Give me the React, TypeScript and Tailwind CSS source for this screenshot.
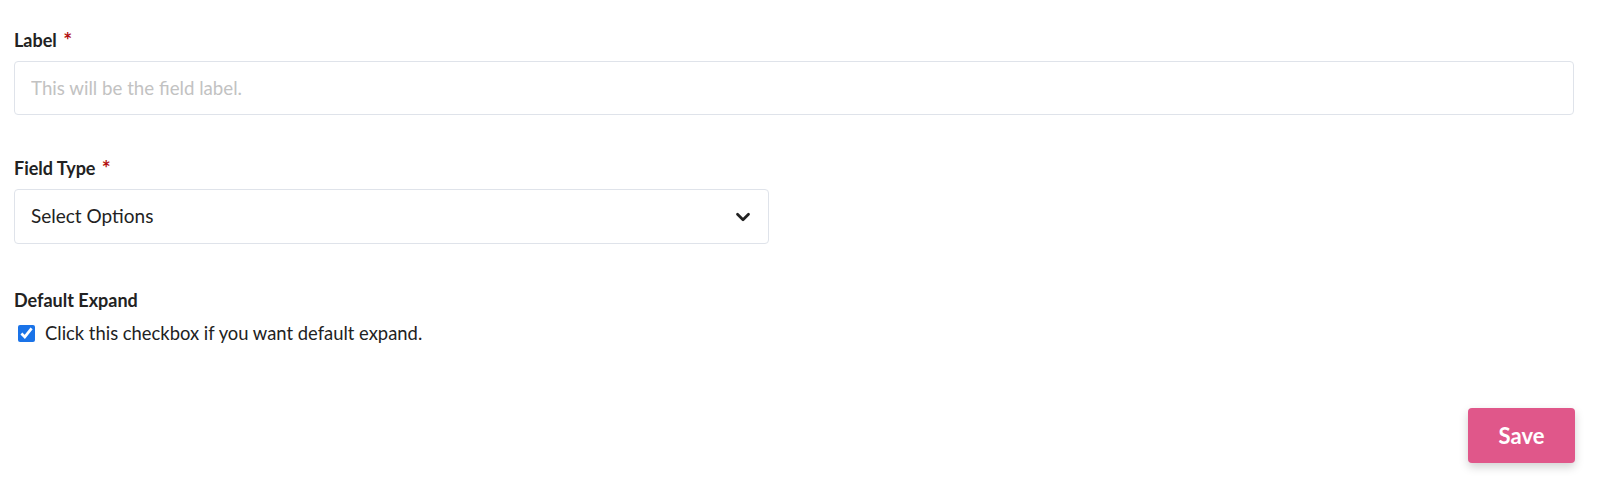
import { ChevronDown } from "lucide-react";

const Req = () => <span className="relative top-[1px] ml-[2px] text-[21px] font-bold leading-none text-[#b30f0f]">*</span>;

const App = () => {
  return (
    <main className="min-h-[484px] bg-white px-[14px] pt-[28px] text-[#222] font-['Lato','Liberation_Sans',sans-serif]">
      <div>
        <label className="block h-[24px] text-[18px] font-bold leading-[24px]">
          Label <Req />
        </label>
        <input
          type="text"
          placeholder="This will be the field label."
          className="mt-[9px] block h-[54px] w-[1560px] rounded-[4px] border border-[#dfe3ea] px-[16px] text-[18.7px] placeholder:text-[#c2c2c2] outline-none"
        />
      </div>

      <div className="mt-[41px]">
        <label className="block h-[24px] text-[18px] font-bold leading-[24px]">
          Field Type <Req />
        </label>
        <div className="mt-[9px] flex h-[55px] w-[755px] items-center justify-between rounded-[4px] border border-[#dfe3ea] pl-[16px] pr-[14px] text-[19px]">
          <span>Select Options</span>
          <ChevronDown size={22} strokeWidth={3} className="text-[#222]" />
        </div>
      </div>

      <div className="mt-[44px]">
        <label className="block text-[18px] font-bold leading-[24px]">Default Expand</label>
        <label className="mt-[9px] flex items-center gap-[10px] pl-[4px] text-[18.4px] leading-[24px]">
          <input type="checkbox" defaultChecked className="h-[17px] w-[17px] accent-[#1a73e8]" />
          Click this checkbox if you want default expand.
        </label>
      </div>

      <div className="mt-[63px] flex justify-end pr-[11px]">
        <button className="h-[55px] w-[107px] rounded-[4px] bg-[#e0578a] text-[22px] font-bold text-white shadow-[0_4px_10px_rgba(0,0,0,0.18)]">
          Save
        </button>
      </div>
    </main>
  );
};

export default App;
